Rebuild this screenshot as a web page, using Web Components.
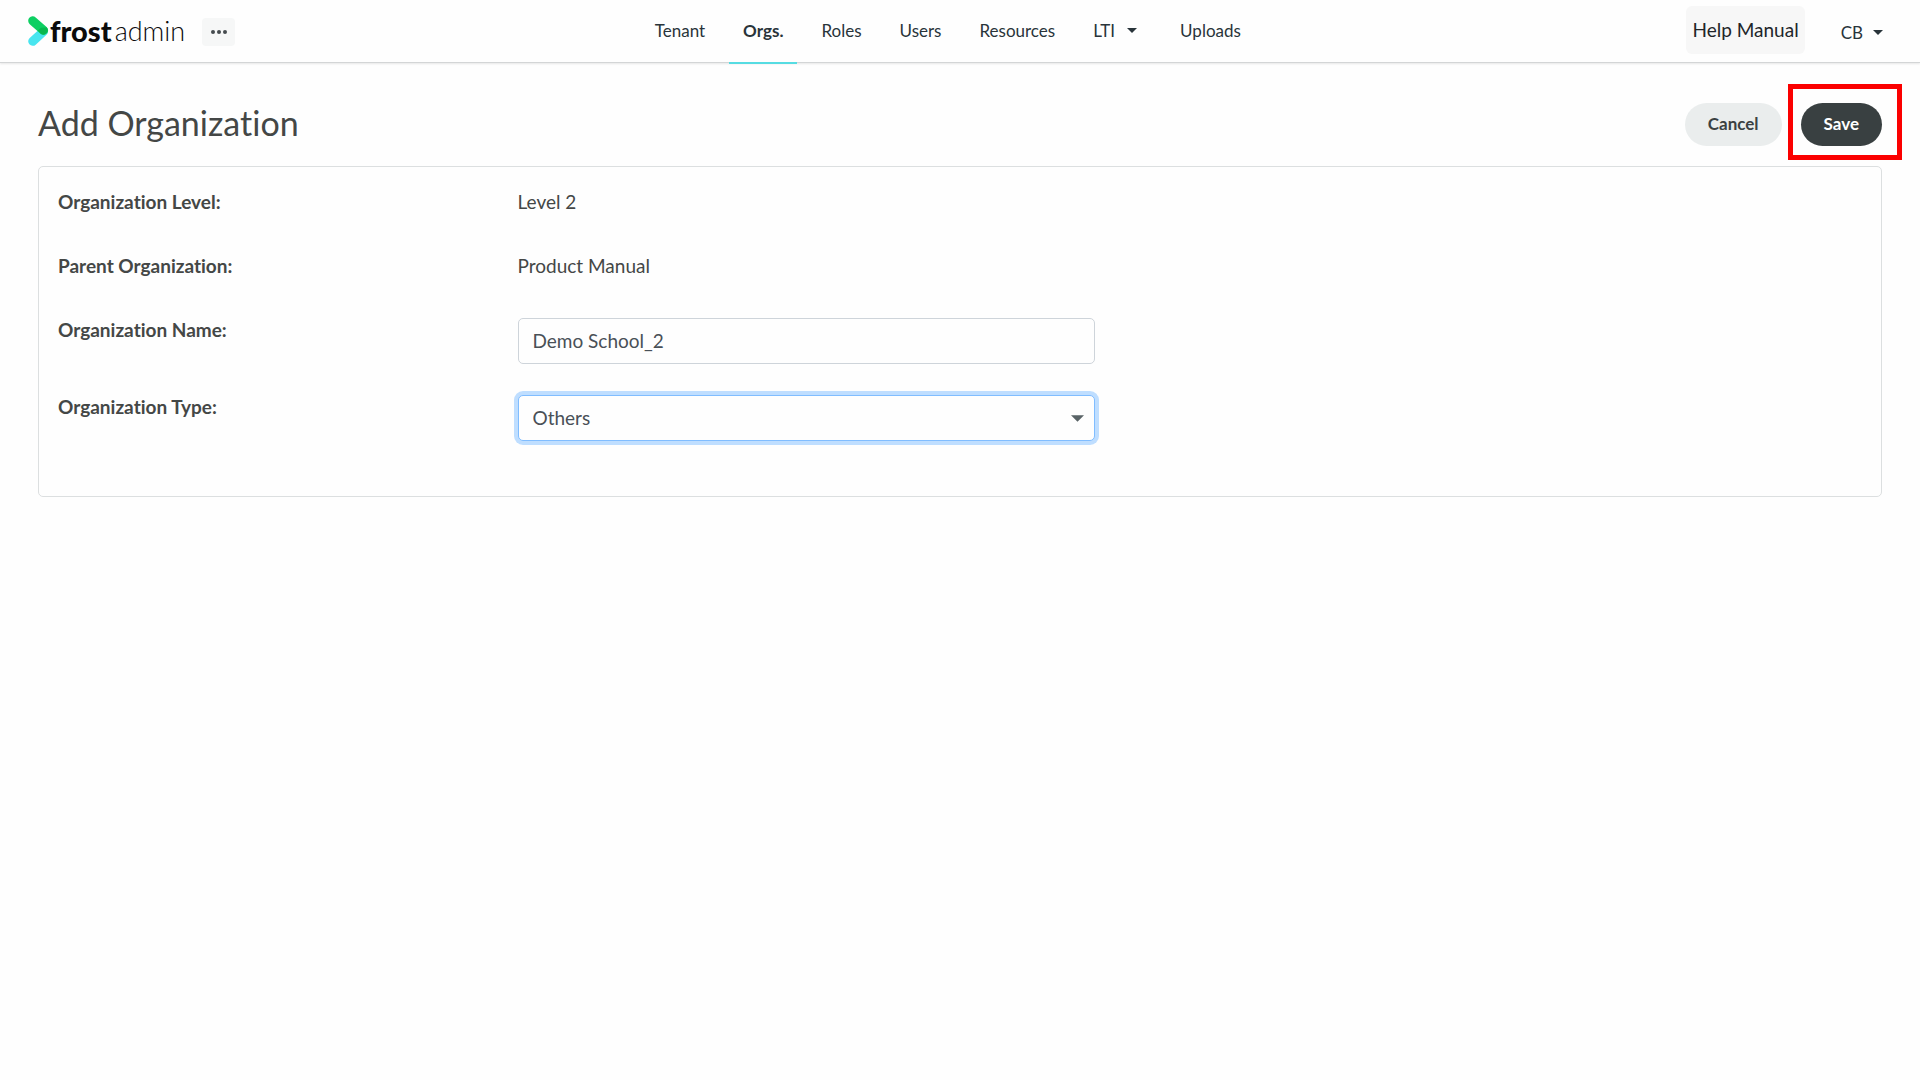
<!DOCTYPE html>
<html lang="en">
<head>
<meta charset="utf-8">
<title>Frost Admin - Add Organization</title>
<style>
  body { margin: 0; background: #fefefe; color: #444746; font-family: Lato, "Liberation Sans", sans-serif; font-size: 19px; font-variant-ligatures: none; }
</style>
</head>
<body>
<admin-app></admin-app>

<script>
const define = (name, html) => {
  const template = document.createElement('template');
  template.innerHTML = html;
  customElements.define(name, class extends HTMLElement {
    constructor() {
      super();
      this.attachShadow({ mode: 'open' }).append(template.content.cloneNode(true));
    }
  });
};

define('caret-icon', `
  <style>:host { display: inline-flex; } svg { display: block; width: 10px; height: 5px; fill: currentColor; }</style>
  <svg viewBox="0 0 10 5" aria-hidden="true"><path d="M0 0h10L5 5z"/></svg>
`);

define('frost-logo', `
  <style>
    :host { display: flex; align-items: center; color: #0b0b0b; line-height: 34px; }
    svg { width: 21px; height: 30px; flex: none; }
    .brand { margin-left: 1px; font-size: 29px; font-weight: 900; }
    .product { margin-left: 3px; font-size: 27px; font-weight: 300; }
  </style>
  <svg viewBox="0 0 21 30" aria-hidden="true">
    <path d="M4.7 25.3L15.5 15.5" fill="none" stroke="#48e5ef" stroke-width="9" stroke-linecap="round"/>
    <path d="M4.7 4.8L15.6 14.4" fill="none" stroke="#0dcf62" stroke-width="9" stroke-linecap="round"/>
    <path d="M9.8 14.6L13 11.7L18.9 11.4A4.6 4.6 0 0 1 13 18z" fill="#08b84f"/>
  </svg>
  <span class="brand">frost</span><span class="product">admin</span>
`);

define('nav-link', `
  <style>
    :host { display: flex; }
    a { display: flex; align-items: center; gap: 12px; padding: 0 14px 1px; color: #29343a; font-size: 17px; text-decoration: none; border-bottom: 2px solid transparent; }
    :host([active]) a { font-weight: 700; border-color: #56dce2; }
  </style>
  <a href="#"><slot></slot></a>
`);

define('top-bar', `
  <style>
    :host { display: flex; justify-content: space-between; height: 62px; padding: 0 20px 0 28px; background: #fefefe; border-bottom: 1px solid #d3d5d6; box-shadow: 0 1px 2px #00000018; }
    .left, .right { display: flex; align-items: center; }
    .left { gap: 17px; }
    .right { gap: 20px; margin-left: 26px; }
    nav { display: flex; gap: 10px; margin-bottom: -2px; }
    nav-link.menu { margin-right: 5px; }
    button { font: inherit; border: 0; cursor: pointer; }
    .more { display: flex; align-items: center; justify-content: center; width: 33px; height: 28px; margin-top: 2px; padding: 0; background: #f6f7f7; border-radius: 4px; }
    .more svg { width: 16px; height: 4px; fill: #454b4e; }
    .help { height: 48px; padding: 0 6px; line-height: 48px; margin-bottom: 2px; background: #f7f7f7; color: #212529; border-radius: 6px; text-decoration: none; }
    .user { display: flex; align-items: center; gap: 10px; padding: 3px 17px 0 16px; background: none; color: #29343a; font-size: 17px; }
  </style>
  <div class="left">
    <frost-logo></frost-logo>
    <button class="more" type="button" aria-label="More"><svg viewBox="0 0 16 4"><circle cx="2" cy="2" r="2"/><circle cx="8" cy="2" r="2"/><circle cx="14" cy="2" r="2"/></svg></button>
  </div>
  <nav>
    <nav-link>Tenant</nav-link>
    <nav-link active>Orgs.</nav-link>
    <nav-link>Roles</nav-link>
    <nav-link>Users</nav-link>
    <nav-link>Resources</nav-link>
    <nav-link class="menu">LTI <caret-icon></caret-icon></nav-link>
    <nav-link>Uploads</nav-link>
  </nav>
  <div class="right">
    <a class="help" href="#">Help Manual</a>
    <button class="user" type="button">CB <caret-icon></caret-icon></button>
  </div>
`);

define('pill-button', `
  <style>
    :host { display: block; position: relative; }
    button { height: 43px; padding: 0 23px 2px; border: 0; border-radius: 22px; background: #eaeded; color: #3b4142; font: inherit; font-size: 17px; font-weight: 700; cursor: pointer; }
    :host([primary]) button { background: #394041; color: #fff; }
    :host([highlighted])::after { content: ""; position: absolute; inset: -19px -20px -14px -13px; border: 5px solid #fb0000; pointer-events: none; }
  </style>
  <button type="button"><slot></slot></button>
`);

define('page-heading', `
  <style>
    :host { display: flex; align-items: flex-start; justify-content: space-between; padding: 40px 0 20px; }
    h1 { margin: 0; font-size: 34px; font-weight: 400; line-height: 40px; }
    .actions { display: flex; gap: 19px; }
  </style>
  <h1><slot></slot></h1>
  <div class="actions"><slot name="actions"></slot></div>
`);

define('form-row', `
  <style>
    :host { display: grid; grid-template-columns: 3fr 4fr 5fr; min-height: 33px; margin-bottom: 31px; line-height: 24px; }
    div { padding: 0 19px; }
    .name { font-weight: 700; }
    .value { padding: 0 19px 0 18px; }
  </style>
  <div class="name"><slot name="label"></slot></div>
  <div class="value"><slot></slot></div>
`);

define('organization-form', `
  <style>
    :host { display: block; padding: 23px 0 24px; border: 1px solid #dcdfe0; border-radius: 5px; }
    input, select { display: block; box-sizing: border-box; width: 100%; height: 46px; padding: 0 14px 1px; border: 1px solid #ced4da; border-radius: 5px; background: #fefefe; color: #495057; font: inherit; outline: 0; }
    select { appearance: none; border-color: #80bdff; box-shadow: 0 0 0 4px #bfdeff; }
    .picker { display: grid; grid-template-columns: 1fr auto; align-items: center; }
    .picker > * { grid-row: 1; }
    select { grid-column: 1 / 3; }
    .picker svg { grid-column: 2; width: 13px; height: 7px; margin-right: 11px; fill: #596366; pointer-events: none; z-index: 1; }
  </style>
  <form-row><span slot="label">Organization Level:</span>Level 2</form-row>
  <form-row><span slot="label">Parent Organization:</span>Product Manual</form-row>
  <form-row><label slot="label" for="name">Organization Name:</label><input id="name" type="text" value="Demo School_2"></form-row>
  <form-row><label slot="label" for="type">Organization Type:</label>
    <span class="picker"><select id="type"><option>Others</option></select><svg viewBox="0 0 14 7" aria-hidden="true"><path d="M0 0h14L7 7z"/></svg></span>
  </form-row>
`);

define('admin-app', `
  <style>
    :host { display: block; }
    main { padding: 0 38px; }
  </style>
  <top-bar></top-bar>
  <main>
    <page-heading>Add Organization
      <pill-button slot="actions">Cancel</pill-button>
      <pill-button slot="actions" primary highlighted>Save</pill-button>
    </page-heading>
    <organization-form></organization-form>
  </main>
`);
</script>
</body>
</html>
